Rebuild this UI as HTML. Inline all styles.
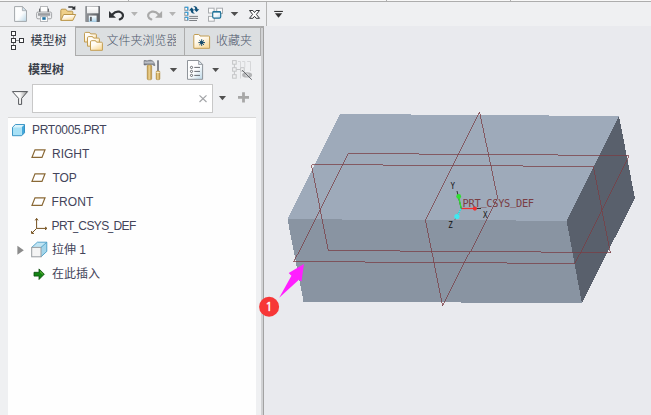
<!DOCTYPE html>
<html lang="zh-CN">
<head>
<meta charset="utf-8">
<title>模型树</title>
<style>
html,body{margin:0;padding:0;}
body{width:651px;height:415px;overflow:hidden;position:relative;background:#e9eaee;
font-family:"Liberation Sans","Noto Sans CJK SC",sans-serif;color:#3a3a44;}
.abs{position:absolute;}
#toolbar{left:0;top:0;width:651px;height:26px;background:#eff0f2;}
#topline{left:0;top:0;width:651px;height:1px;background:#f8f8f8;border-bottom:1px solid #adadad;}
.tick{top:0;width:1px;height:1px;background:#b0b0b0;}
#tbsep{left:266px;top:2px;width:1px;height:24px;background:#b4b4b4;}
#panel{left:0;top:26px;width:262px;height:389px;background:#eff0f2;}
#divider{left:261px;top:27px;width:2px;height:388px;background:#d1d2d4;border-right:1px solid #a2a2a2;}
#tabline{left:0;top:26px;width:264px;height:1px;background:#c6c6c6;}
.tab{font-size:12px;line-height:27px;white-space:nowrap;box-sizing:border-box;}
#tab1{left:0px;width:75px;top:27px;height:29px;background:#eff0f2;}
#tabs23{left:75px;top:26px;width:186px;height:30px;background:#acacac;}
#tab2{left:76px;top:28px;width:108px;height:27px;background:#dcdfe1;}
#tab3{left:185px;top:28px;width:75px;height:27px;background:#dcdfe1;}
.tabtxt{position:absolute;top:0;}
#tree{left:8px;top:117px;width:248px;height:298px;background:#fefefe;border-top:1px solid #d8d8d8;}
.row{position:absolute;left:0;height:24px;line-height:24px;font-size:12px;white-space:nowrap;color:#43445a;}
.us{display:inline-block;width:5px;overflow:visible;letter-spacing:0;margin-left:-0.3px;transform:scaleX(0.78);transform-origin:0 0;}
#search{left:32px;top:84px;width:181px;height:29px;background:#fff;border:1px solid #c8c8c8;box-sizing:border-box;}
svg{position:absolute;left:0;top:0;overflow:visible;}
</style>
</head>
<body>
<!-- viewport 3D model -->
<svg id="model" class="abs" width="651" height="415" viewBox="0 0 651 415" shape-rendering="crispEdges">
  <polygon points="340,114 619,116 566.6,220.8 287.5,219.2" fill="#9eaaba"/>
  <polygon points="287.5,219.2 566.6,220.8 581.9,303.2 303.5,301.6" fill="#8994a2"/>
  <polygon points="566.6,220.8 619,116 634.9,198.1 581.9,303.2" fill="#59606c"/>
  <g fill="none" stroke="#7a3e44" stroke-width="0.75">
    <polygon points="311.5,164.5 593.5,166.5 610.5,252.5 328.5,250.5"/>
    <polygon points="347.5,153.5 628.5,155.5 574.5,263.5 293.5,261.5"/>
    <polygon points="479.5,111.6 497.5,197.5 442.5,305.5 425.5,219.5"/>
  </g>
  <!-- csys -->
  <g shape-rendering="auto">
    <line x1="461" y1="208.5" x2="481" y2="208.5" stroke="#333" stroke-width="1"/>
    <line x1="461" y1="208.5" x2="475" y2="208.5" stroke="#f03030" stroke-width="1.2"/>
    <line x1="461.2" y1="208.5" x2="457" y2="191" stroke="#333" stroke-width="1"/>
    <line x1="461.2" y1="208.5" x2="458.8" y2="197" stroke="#30e030" stroke-width="1.3"/>
    <line x1="461.2" y1="208.5" x2="455" y2="219.5" stroke="#333" stroke-width="1"/>
    <line x1="461.2" y1="208.5" x2="457" y2="216" stroke="#40e8f0" stroke-width="1.3"/>
    <circle cx="474.9" cy="208.6" r="2.1" fill="#f03030"/>
    <circle cx="458.7" cy="196.5" r="2.4" fill="#30e030"/>
    <circle cx="456.9" cy="216.5" r="2.6" fill="#40e8f0"/>
    <text transform="translate(452.8 189.2) scale(0.78 1)" text-anchor="middle" font-family="'DejaVu Sans Mono','Liberation Mono',monospace" font-size="9.6" fill="#111">Y</text>
    <text transform="translate(485.2 218) scale(0.78 1)" text-anchor="middle" font-family="'DejaVu Sans Mono','Liberation Mono',monospace" font-size="9.6" fill="#111">X</text>
    <text transform="translate(450.5 228.3) scale(0.78 1)" text-anchor="middle" font-family="'DejaVu Sans Mono','Liberation Mono',monospace" font-size="9.6" fill="#111">Z</text>
    <text x="462.6" y="207" font-family="'DejaVu Sans Mono','Liberation Mono',monospace" font-size="10.4" letter-spacing="-0.33" fill="#7a3e44">PRT<tspan dy="-1.8">_</tspan><tspan dy="1.8">CSYS</tspan><tspan dy="-1.8">_</tspan><tspan dy="1.8">DEF</tspan></text>
  </g>
</svg>

<div id="toolbar" class="abs"></div>
<div id="topline" class="abs"></div>
<div id="tbsep" class="abs"></div>
<div class="abs tick" style="left:128px"></div><div class="abs tick" style="left:386px"></div><div class="abs tick" style="left:510px"></div>
<div id="panel" class="abs"></div>
<div id="divider" class="abs"></div>
<div id="tabline" class="abs"></div>

<div id="tabs23" class="abs"></div>
<div class="abs" style="left:261px;top:26px;width:3px;height:2px;background:#a8a8a8;"></div>
<div id="tab2" class="abs tab"><span class="tabtxt" style="left:30.5px;width:69.5px;overflow:hidden;font-weight:300;color:#4c566a">文件夹浏览器</span></div>
<div id="tab3" class="abs tab"><span class="tabtxt" style="left:31px;font-weight:300;color:#4c566a">收藏夹</span></div>
<div id="tab1" class="abs tab"><span class="tabtxt" style="left:30.5px;top:1px;color:#2e3644">模型树</span></div>

<div class="abs" style="left:28px;top:59.5px;font-size:12px;line-height:20px;font-weight:bold;color:#3a3f4a;">模型树</div>
<div id="search" class="abs"></div>

<div id="tree" class="abs">
  <div class="row" style="top:0px;left:24px;letter-spacing:-0.3px;">PRT0005.PRT</div>
  <div class="row" style="top:24px;left:44px;letter-spacing:0;">RIGHT</div>
  <div class="row" style="top:48px;left:44.4px;letter-spacing:0;">TOP</div>
  <div class="row" style="top:72px;left:43.6px;letter-spacing:0.1px;">FRONT</div>
  <div class="row" style="top:96px;left:43.6px;letter-spacing:-0.58px;">PRT<span class="us">_</span>CSYS<span class="us">_</span>DEF</div>
  <div class="row" style="top:120px;left:44px;letter-spacing:0;">拉伸 1</div>
  <div class="row" style="top:144px;left:44px;letter-spacing:0;">在此插入</div>
</div>

<svg id="icons" class="abs" width="651" height="415" viewBox="0 0 651 415">

<!-- ===== top toolbar icons ===== -->
<defs>
  <linearGradient id="gPaper" x1="0" y1="0" x2="1" y2="1"><stop offset="0" stop-color="#ffffff"/><stop offset="0.55" stop-color="#fbfcfd"/><stop offset="1" stop-color="#b9d6e6"/></linearGradient>
  <linearGradient id="gFold" x1="0" y1="0" x2="0.6" y2="1"><stop offset="0" stop-color="#ffffff"/><stop offset="0.45" stop-color="#fffaf0"/><stop offset="1" stop-color="#fadda0"/></linearGradient>
  <linearGradient id="gGold" x1="0" y1="0" x2="1" y2="0"><stop offset="0" stop-color="#b98f3c"/><stop offset="0.45" stop-color="#efd594"/><stop offset="1" stop-color="#b48a3a"/></linearGradient>
  <linearGradient id="gBlue" x1="0" y1="0" x2="0" y2="1"><stop offset="0" stop-color="#ffffff"/><stop offset="1" stop-color="#a9d3ec"/></linearGradient>
  <linearGradient id="gFun" x1="0" y1="0" x2="1" y2="0"><stop offset="0" stop-color="#ffffff"/><stop offset="0.5" stop-color="#fafafa"/><stop offset="1" stop-color="#8e8e8e"/></linearGradient>
</defs>
<!-- new -->
<path d="M14.6 6.6 H22.4 L26.5 10.7 V21.4 H14.6 Z" fill="url(#gPaper)" stroke="#a3a7ab" stroke-width="1"/>
<path d="M22.4 6.6 V10.7 H26.5 Z" fill="#d3e4ef" stroke="#a3a7ab" stroke-width="0.8"/>
<!-- print -->
<defs><linearGradient id="gBand" x1="0" y1="0" x2="0" y2="1"><stop offset="0" stop-color="#85888c"/><stop offset="1" stop-color="#b9bbbe"/></linearGradient></defs>
<rect x="40.5" y="6.5" width="7" height="7" fill="#fdfdfd" stroke="#b6b8bb" stroke-width="1"/>
<g stroke="#5c5f64" stroke-width="1"><line x1="39.6" y1="8.6" x2="39.6" y2="12"/><line x1="48.4" y1="8.6" x2="48.4" y2="12"/></g>
<rect x="36.6" y="12" width="15" height="6.8" rx="1.4" fill="#eff0f2" stroke="#8f9296" stroke-width="0.8"/>
<rect x="38" y="13.3" width="12.2" height="2.8" fill="url(#gBand)"/>
<rect x="40.5" y="16.6" width="7" height="4.9" fill="#fdfdfd" stroke="#b6b8bb" stroke-width="1"/>
<rect x="42.3" y="17.2" width="3.4" height="2.6" fill="#1f72a3"/>
<!-- open folder -->
<path d="M60.8 20.3 V10.4 Q60.8 9.2 62 9.2 H65.8 L67.4 11.2 H71.8 Q72.8 11.2 72.8 12.2 V14.4" fill="#efd08a" stroke="#b9954a" stroke-width="1"/>
<path d="M60.9 20.4 L63.6 14.5 H75.7 L72.8 20.4 Z" fill="url(#gFold)" stroke="#b9954a" stroke-width="1" stroke-linejoin="round"/>
<path d="M68.3 7 H72 Q73.2 7 73.8 8" fill="none" stroke="#2c2f33" stroke-width="1.3"/>
<path d="M71.4 9.6 L75.3 5.8 L75.3 9.7 Z" fill="#2c2f33"/>
<!-- save -->
<defs><linearGradient id="gSave" x1="0" y1="0" x2="1" y2="0"><stop offset="0" stop-color="#94979b"/><stop offset="0.5" stop-color="#74777c"/><stop offset="1" stop-color="#5b5f65"/></linearGradient>
<linearGradient id="gLabel" x1="0" y1="0" x2="0" y2="1"><stop offset="0" stop-color="#ffffff"/><stop offset="1" stop-color="#e9eaeb"/></linearGradient></defs>
<rect x="85.2" y="6.1" width="14.7" height="15.8" rx="0.6" fill="url(#gSave)"/>
<rect x="87" y="6.5" width="11.4" height="6.8" fill="url(#gLabel)"/>
<rect x="88.8" y="15.6" width="7.8" height="6.3" fill="url(#gBlue)"/>
<rect x="90" y="16.8" width="1.8" height="4.3" fill="#5b5f65"/>
<!-- undo -->
<path d="M112.6 14.2 Q115.6 10.9 119.4 11.7 Q123.4 13 122.9 16.2 Q122.4 18.6 119.8 19.4" fill="none" stroke="#2e3135" stroke-width="2.2" stroke-linecap="round"/>
<path d="M109 11 L109 17.8 L116 17.8 Z" fill="#2e3135"/>
<path d="M131 12 H137.8 L134.4 16 Z" fill="#b4b4b4"/>
<!-- redo (disabled) -->
<path d="M158.5 14.2 Q155.5 10.9 151.7 11.7 Q147.7 13 148.2 16.2 Q148.7 18.6 151.3 19.4" fill="none" stroke="#a9a9a9" stroke-width="2.2" stroke-linecap="round"/>
<path d="M162.1 11 L162.1 17.8 L155.1 17.8 Z" fill="#a9a9a9"/>
<path d="M169.1 12 H175.9 L172.5 16 Z" fill="#b4b4b4"/>
<!-- regenerate -->
<g fill="#fff" stroke="#8f9296" stroke-width="1">
<rect x="184.8" y="7.3" width="3" height="3"/><rect x="184.8" y="12.3" width="3" height="3"/><rect x="184.8" y="17.3" width="3" height="3"/>
</g>
<g fill="none" stroke="#2a9fe0" stroke-width="1.1">
<path d="M184.8 7.3 H187.8 V10.3"/><path d="M184.8 12.3 H187.8 V15.3"/><path d="M184.8 17.3 H187.8 V20.3"/>
</g>
<g stroke="#6e7277" stroke-width="0.9"><line x1="189.2" y1="16.4" x2="198" y2="16.4"/><line x1="189.2" y1="18.4" x2="198" y2="18.4"/><line x1="189.2" y1="20.5" x2="197" y2="20.5"/></g>
<path d="M191.6 7.6 L194.4 10.4 H192.9 Q193 12.6 195 13.6 Q191.2 13.8 190.6 10.4 H188.9 Z" fill="#0f5079"/>
<path d="M196.6 12.1 L193.8 9.3 H195.3 Q195.2 7.1 193.2 6.1 Q197 5.9 197.6 9.3 H199.3 Z" fill="#0f5079"/>
<!-- windows -->
<g fill="#fcfcfc" stroke="#a9acaf" stroke-width="1">
<rect x="208.5" y="8.2" width="5.6" height="4.8"/><rect x="216.7" y="8.2" width="5.8" height="5.2"/><rect x="208.5" y="16.4" width="5.8" height="4.8"/>
</g>
<defs><linearGradient id="gWin" x1="0" y1="0" x2="1" y2="1"><stop offset="0" stop-color="#ffffff"/><stop offset="0.5" stop-color="#f4f9fc"/><stop offset="1" stop-color="#b7d9ee"/></linearGradient></defs>
<rect x="212.7" y="11.6" width="8" height="6.5" rx="1.3" fill="url(#gWin)" stroke="#1f7399" stroke-width="1.2"/>
<rect x="212.7" y="11" width="8" height="1.4" rx="0.6" fill="#1f7399"/>
<path d="M230.7 11.9 H238.3 L234.5 16.1 Z" fill="#4f4f4f"/>
<!-- close X -->
<path d="M249.5 10.5 H252.9 L254.5 12.5 L256.1 10.5 H259.5 L256.4 14.4 L259.5 18.3 H256.1 L254.5 16.3 L252.9 18.3 H249.5 L252.6 14.4 Z" fill="#fdfdfd" stroke="#33363a" stroke-width="1" stroke-linejoin="round"/>
<!-- overflow -->
<rect x="274.2" y="10.9" width="8.7" height="1.1" fill="#333"/>
<path d="M274.9 13.2 H282.2 L278.5 17.8 Z" fill="#333"/>

<!-- ===== tab icons ===== -->
<g fill="#fff" stroke="#37393d" stroke-width="1" shape-rendering="crispEdges">
<rect x="11.5" y="31.5" width="4" height="4"/><rect x="11.5" y="38.5" width="4" height="4"/><rect x="11.5" y="45.5" width="4" height="4"/><rect x="19.5" y="38.5" width="4" height="4"/>
</g>
<g stroke="#8b8d90" stroke-width="1" shape-rendering="crispEdges"><line x1="13.5" y1="36" x2="13.5" y2="38"/><line x1="13.5" y1="43" x2="13.5" y2="45"/><line x1="16" y1="40.5" x2="19" y2="40.5"/></g>
<g fill="url(#gFold)" stroke="#c29d52" stroke-width="1" stroke-linejoin="round">
<path d="M84.5 42 V33.6 Q84.5 32.4 85.7 32.4 H89 Q90.2 32.4 90.6 33.9 H95.4 Q96.4 33.9 96.4 34.9 V42 Z"/>
<path d="M87.5 46.2 V37.8 Q87.5 36.6 88.7 36.6 H92 Q93.2 36.6 93.6 38.1 H98.4 Q99.4 38.1 99.4 39.1 V46.2 Z"/>
<path d="M90.5 50.3 V41.9 Q90.5 40.7 91.7 40.7 H95 Q96.2 40.7 96.6 42.2 H101.4 Q102.4 42.2 102.4 43.2 V50.3 Z"/>
</g>
<path d="M193.8 48.3 V35.6 Q193.8 34.5 195 34.5 H198.6 Q199.6 34.5 200 36 H208.6 Q209.6 36 209.6 37 V48.3 Z" fill="url(#gFold)" stroke="#c29d52" stroke-width="1" stroke-linejoin="round"/>
<g stroke="#154a6b" stroke-width="1"><line x1="198.4" y1="42.6" x2="205" y2="42.6"/><line x1="201.7" y1="39.3" x2="201.7" y2="45.9"/><line x1="199.4" y1="40.3" x2="204" y2="44.9"/><line x1="204" y1="40.3" x2="199.4" y2="44.9"/></g>
<circle cx="201.7" cy="42.6" r="1.5" fill="#154a6b"/>

<!-- ===== panel toolbar icons ===== -->
<defs><linearGradient id="gHead" x1="0" y1="0" x2="0" y2="1"><stop offset="0" stop-color="#5f636d"/><stop offset="0.35" stop-color="#c9cdd4"/><stop offset="1" stop-color="#565a64"/></linearGradient></defs>
<path d="M144 60.6 H146.4 V61.2 Q148 60.2 150.5 60.2 Q154.4 60.6 154.9 65.6 L153.6 65.4 Q153.2 64.4 152 64.6 H146.4 V65 H144 Z" fill="url(#gHead)" stroke="#60646e" stroke-width="0.5"/>
<rect x="147.2" y="65" width="4.5" height="14.8" rx="1.2" fill="url(#gGold)" stroke="#aa8638" stroke-width="0.5"/>
<rect x="157.1" y="60.3" width="1.8" height="10.8" fill="#787c86"/>
<rect x="156.1" y="71" width="3.8" height="8.7" rx="1" fill="url(#gGold)" stroke="#aa8638" stroke-width="0.5"/>
<rect x="156.3" y="72.2" width="3.4" height="0.8" fill="#fff6dc"/>
<path d="M169.8 68 H177.2 L173.5 72.1 Z" fill="#505050"/>
<path d="M187.5 60.5 H198.6 L202.6 64.5 V79.3 H187.5 Z" fill="url(#gPaper)" stroke="#8f949a" stroke-width="1"/>
<path d="M198.6 60.5 V64.5 H202.6 Z" fill="#dbe6ee" stroke="#8f949a" stroke-width="0.8"/>
<g fill="#fff" stroke="#4a4e54" stroke-width="0.8"><circle cx="191.5" cy="67.4" r="1.1"/><circle cx="191.5" cy="71.4" r="1.1"/><circle cx="191.5" cy="75.4" r="1.1"/></g>
<g stroke="#666a70" stroke-width="1"><line x1="194.3" y1="67.4" x2="200" y2="67.4"/><line x1="194.3" y1="71.4" x2="200" y2="71.4"/><line x1="194.3" y1="75.4" x2="200" y2="75.4"/></g>
<path d="M212.2 68 H219.1 L215.65 71.9 Z" fill="#505050"/>
<g fill="#f1f1f2" stroke="#c4c5c7" stroke-width="1">
<rect x="232.6" y="60.6" width="3.6" height="3.6"/><rect x="232.6" y="67.7" width="3.6" height="3.5"/><rect x="232.6" y="74.7" width="3.6" height="3.5"/><rect x="240.6" y="67.7" width="3.6" height="3.5"/>
</g>
<g fill="none" stroke="#c4c5c7" stroke-width="1">
<line x1="234.4" y1="64.2" x2="234.4" y2="67.7"/><line x1="234.4" y1="71.2" x2="234.4" y2="74.7"/><line x1="236.2" y1="69.5" x2="240.6" y2="69.5"/>
</g>
<g fill="none" stroke="#d6d7d9" stroke-width="1">
<path d="M238 61.5 H240.5 V67 M240.5 72 V78.5 M242.2 61.5 H244.8 V67.4 M247.2 61.5 H250.5 V71"/>
</g>
<ellipse cx="247.1" cy="74.9" rx="5" ry="2.6" fill="#b3b4b6"/>
<ellipse cx="247.1" cy="74.9" rx="2" ry="1.7" fill="#d4d5d7"/>
<line x1="242.1" y1="70.2" x2="251.8" y2="79.7" stroke="#55585d" stroke-width="0.9"/>

<!-- funnel / search row -->
<path d="M12.4 91.6 H27.6 L21.6 98.4 V104.4 H18.6 V98.4 Z" fill="url(#gFun)" stroke="#4c4f53" stroke-width="0.95" stroke-linejoin="round"/>
<g stroke="#a2a4a7" stroke-width="1.15"><line x1="199.5" y1="95.3" x2="206.5" y2="102"/><line x1="206.5" y1="95.3" x2="199.5" y2="102"/></g>
<path d="M218.9 96 H226 L222.45 100.3 Z" fill="#505050"/>
<path d="M242.1 92.2 H244.9 V96 H249 V98.8 H244.9 V102.6 H242.1 V98.8 H238 V96 H242.1 Z" fill="#a7a7a7"/>

<!-- ===== tree icons ===== -->
<path d="M12.5 127.3 L15.4 124.5 H24.5 L21.7 127.3 Z" fill="#d9f3fc"/>
<path d="M21.7 127.3 L24.5 124.5 V132.8 L21.7 135.7 Z" fill="#43a8db"/>
<rect x="12.5" y="127.3" width="9.2" height="8.4" fill="#a8e1f6"/>
<path d="M12.5 127.3 L15.4 124.5 H24.5 V132.8 L21.7 135.7 H12.5 Z" fill="none" stroke="#2387bd" stroke-width="0.85" stroke-linejoin="round"/>
<g fill="#fff" stroke="#8a6936" stroke-width="1.2" stroke-linejoin="miter">
<path d="M35 149.8 H45 L42 157.4 H32 Z"/>
<path d="M35 173.8 H45 L42 181.4 H32 Z"/>
<path d="M35 197.8 H45 L42 205.4 H32 Z"/>
</g>
<g fill="none" stroke="#75511f" stroke-width="1"><path d="M36.6 218.6 V228.4 H46.6 M36.6 228.4 L31.8 233.2"/><path d="M35.2 220.4 L36.6 218.4 L38 220.4 M45 227 L47 228.4 L45 229.8 M31.6 231 V233.4 H34"/></g>
<path d="M17.4 245.8 L23.8 250.3 L17.4 254.8 Z" fill="#8b8b8b"/>
<path d="M31.7 247.4 L37.4 242.2 H46.8 V251.4 L41 256.8 H31.7 Z" fill="#bfe4f3"/>
<path d="M41 247.4 L46.8 242.2 V251.4 L41 256.8 Z" fill="#a3d5ea"/>
<path d="M31.7 247.4 L37.4 242.2 H46.8 V251.4 L41 256.8" fill="none" stroke="#4a9dc6" stroke-width="0.9" stroke-linejoin="round"/>
<rect x="31.7" y="247.4" width="9.3" height="9.4" fill="#f4f4f4" stroke="#9a9da1" stroke-width="1"/>
<path d="M41 247.4 L46.8 242.2" stroke="#4a9dc6" stroke-width="0.9"/>
<path d="M34 272.3 H39 V268.9 L44.3 274.2 L39 279.5 V276.1 H34 Z" fill="#138413" stroke="#0b4d0d" stroke-width="0.8" stroke-linejoin="round"/>
<path d="M40 271.6 L42.8 274.2" stroke="#8fd04a" stroke-width="0.8"/>

<g id="badge">
    <!-- arrow + badge -->
    <polygon points="303.9,264 288.7,273 291.4,275.7 279.2,297.8 298.9,279.7 301.5,281.5" fill="#ff1fff"/>
    <circle cx="269.1" cy="306.7" r="10" fill="#f73737"/>
    <text x="269" y="310.7" text-anchor="middle" font-family="NanumGothic,'Liberation Sans',sans-serif" font-size="12.2" fill="#fff" stroke="#fff" stroke-width="0.5">1</text>
</g>
</svg>
</body>
</html>
